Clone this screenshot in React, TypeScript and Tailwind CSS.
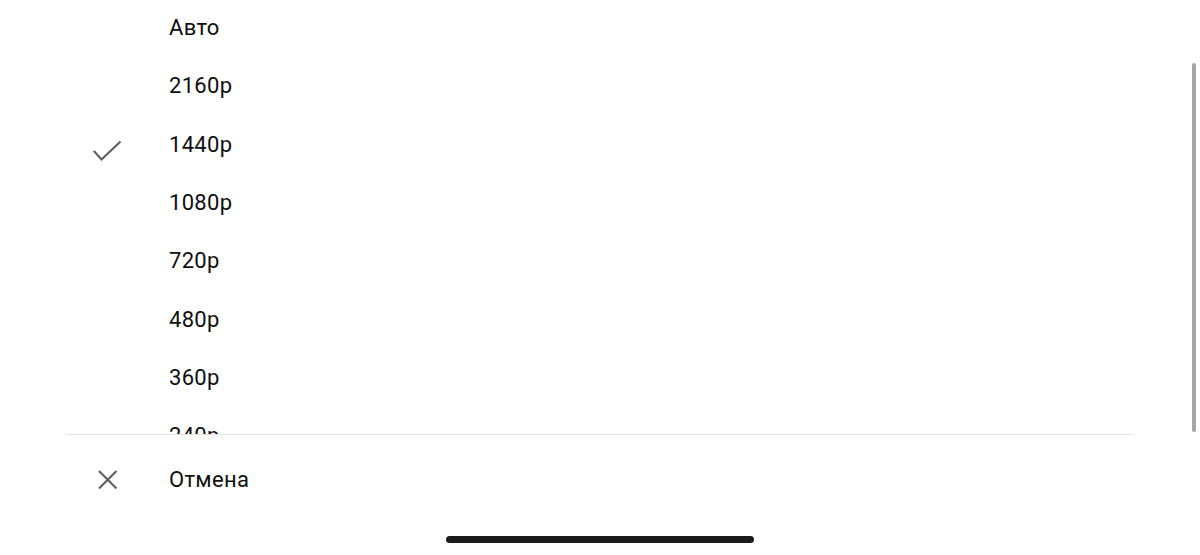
import React from 'react';

const qualities = ['Авто', '2160p', '1440p', '1080p', '720p', '480p', '360p', '240p'];
const selected = '1440p';

const CheckIcon = () => (
    <svg width="34" height="34" viewBox="0 0 34 34" fill="none" className="overflow-visible">
        <polyline points="2.5,23.7 9.5,31.5 27.7,14.3" stroke="#606060" strokeWidth="2.2" strokeLinecap="square" strokeLinejoin="miter" />
    </svg>
);

const CloseIcon = () => (
    <svg width="34" height="34" viewBox="0 0 34 34" fill="none">
        <path d="M7 8 L24.5 25.5 M24.5 8 L7 25.5" stroke="#606060" strokeWidth="2.2" />
    </svg>
);

export default function App() {
    return (
        <div className="relative w-[1200px] h-[555px] bg-white flex flex-col overflow-hidden font-['Roboto','Noto_Sans',sans-serif] text-[#0f0f0f]">
            <div className="h-[434px] overflow-hidden">
                <div className="-mt-[1px]">
                    {qualities.map((q) => (
                        <div key={q} className="h-[58.33px] flex items-center pl-[92px]">
                            <div className="w-[34px] h-[34px] flex-shrink-0">{q === selected && <CheckIcon />}</div>
                            <span className="ml-[43px] text-[22px] leading-none tracking-[0.3px]">{q}</span>
                        </div>
                    ))}
                </div>
            </div>
            <div className="ml-[66px] w-[1067px] h-px bg-[#e3e3e3]"></div>
            <div className="h-[90px] flex items-center pl-[92px]">
                <div className="w-[34px] h-[34px] flex-shrink-0">
                    <CloseIcon />
                </div>
                <span className="ml-[43px] text-[22px] leading-none tracking-[0.3px]">Отмена</span>
            </div>
            <div className="mt-[11px] flex justify-center">
                <div className="w-[308px] h-[7px] rounded-full bg-[#1a1a1a]"></div>
            </div>

            <div className="absolute left-[1192px] top-[63px] w-[4px] h-[369px] rounded-full bg-[#a6a6a6]"></div>
        </div>
    );
}
